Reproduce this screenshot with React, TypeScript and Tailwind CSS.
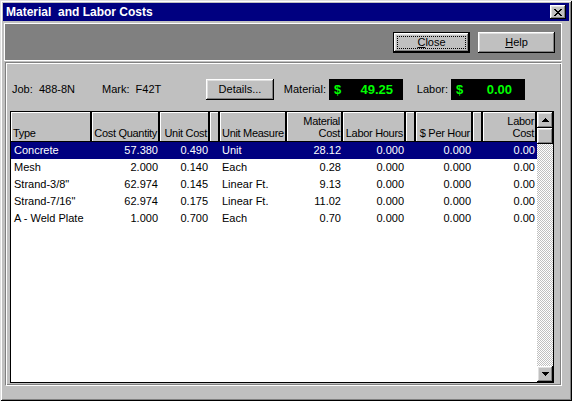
import React from "react";

const raised =
  "shadow-[inset_-1px_-1px_0_#000,inset_1px_1px_0_#fff,inset_-2px_-2px_0_#808080,inset_2px_2px_0_#dfdfdf]";

interface Col {
  head: string[];
  hw: string;
  bw: string;
  right?: boolean;
}

const cols: Col[] = [
  { head: ["Type"], hw: "w-[79px]", bw: "w-[81px] pl-[3px]" },
  { head: ["Cost Quantity"], hw: "w-[66px]", bw: "w-[68px] pr-[2px]", right: true },
  { head: ["Unit Cost"], hw: "w-[48px]", bw: "w-[50px] pr-[2px]", right: true },
  { head: [], hw: "w-[8px]", bw: "w-[10px]" },
  { head: ["Unit Measure"], hw: "w-[65px]", bw: "w-[67px] pl-[2px]" },
  { head: ["Material", "Cost"], hw: "w-[54px]", bw: "w-[56px] pr-[2px]", right: true },
  { head: ["Labor Hours"], hw: "w-[61px]", bw: "w-[63px] pr-[2px]", right: true },
  { head: [], hw: "w-[8px]", bw: "w-[10px]" },
  { head: ["$ Per Hour"], hw: "w-[55px]", bw: "w-[57px] pr-[2px]", right: true },
  { head: [], hw: "w-[8px]", bw: "w-[10px]" },
  { head: ["Labor", "Cost"], hw: "w-[52px]", bw: "w-[54px] pr-[2px]", right: true },
];

const rows: string[][] = [
  ["Concrete", "57.380", "0.490", "", "Unit", "28.12", "0.000", "", "0.000", "", "0.00"],
  ["Mesh", "2.000", "0.140", "", "Each", "0.28", "0.000", "", "0.000", "", "0.00"],
  ["Strand-3/8\"", "62.974", "0.145", "", "Linear Ft.", "9.13", "0.000", "", "0.000", "", "0.00"],
  ["Strand-7/16\"", "62.974", "0.175", "", "Linear Ft.", "11.02", "0.000", "", "0.000", "", "0.00"],
  ["A - Weld Plate", "1.000", "0.700", "", "Each", "0.70", "0.000", "", "0.000", "", "0.00"],
];

const Arrow = ({ down }: { down?: boolean }) => (
  <svg width="7" height="4" viewBox="0 0 7 4" shapeRendering="crispEdges">
    <path d={down ? "M0 0h7L3.5 4z" : "M3.5 0L7 4H0z"} fill="#000" />
  </svg>
);

export default function App() {
  return (
    <div
      className={
        "w-[572px] h-[401px] bg-[#c0c0c0] p-[3px] flex flex-col text-[11px] text-black font-['Liberation_Sans',Arial,sans-serif] " +
        "shadow-[inset_1px_1px_0_#dfdfdf,inset_-1px_-1px_0_#000,inset_2px_2px_0_#fff,inset_-2px_-2px_0_#808080]"
      }
    >
      {/* title bar */}
      <div className="h-[18px] bg-[#000080] flex items-center justify-between pl-[3px] pr-[3px]">
        <span className="text-white font-bold text-[12px] whitespace-pre leading-none">
          Material  and Labor Costs
        </span>
        <div className={"w-[16px] h-[14px] bg-[#c0c0c0] flex items-center justify-center " + raised}>
          <svg width="8" height="7" viewBox="0 0 8 7" shapeRendering="crispEdges">
            <path
              d="M0 0h2v1h1v1h2V1h1V0h2v1H7v1H6v1H5v1h1v1h1v1h1v1H6V6H5V5H3v1H2v1H0V6h1V5h1V4h1V3H2V2H1V1H0z"
              fill="#000"
            />
          </svg>
        </div>
      </div>

      {/* toolbar */}
      <div className="mt-[2px] ml-[1px] w-[558px] h-[38px] bg-[#808080] border border-white flex justify-end items-start pt-[8px] pr-[6px] gap-[8px]">
        <button className="w-[77px] h-[21px] bg-[#c0c0c0] border border-black flex p-0">
          <span className={"flex-1 flex " + raised}>
            <span className="flex-1 m-[3px] border border-dotted border-black flex items-center justify-center">
              <span>
                <span className="underline">C</span>lose
              </span>
            </span>
          </span>
        </button>
        <button className={"w-[77px] h-[21px] bg-[#c0c0c0] flex items-center justify-center " + raised}>
          <span>
            <span className="underline">H</span>elp
          </span>
        </button>
      </div>

      {/* main group */}
      <div className="mt-[1px] ml-[2px] w-[557px] h-[324px] border border-t-[#808080] border-l-[#808080] border-b-white border-r-white shadow-[inset_1px_1px_0_#fff,inset_-1px_-1px_0_#808080] p-[1px] pl-[4px] pt-[16px]">
        <div className="flex items-center h-[21px]">
          <span className="w-[92px] pl-[2px] whitespace-pre">Job:  488-8N</span>
          <span className="w-[104px] whitespace-pre">Mark:  F42T</span>
          <button className={"w-[68px] h-[21px] bg-[#c0c0c0] flex items-center justify-center " + raised}>
            Details...
          </button>
          <span className="w-[55px] text-right pr-[3px]">Material:</span>
          <div className="w-[74px] h-[21px] bg-black flex items-center justify-between pl-[5px] pr-[10px] text-[#00ff00] font-bold text-[13px]">
            <span>$</span>
            <span>49.25</span>
          </div>
          <span className="w-[48px] text-right pr-[3px]">Labor:</span>
          <div className="w-[74px] h-[21px] bg-black flex items-center justify-between pl-[5px] pr-[13px] text-[#00ff00] font-bold text-[13px]">
            <span>$</span>
            <span>0.00</span>
          </div>
        </div>

        {/* grid */}
        <div className="mt-[11px] w-[544px] h-[272px] border border-black bg-white flex">
          <div className="w-[526px] flex flex-col">
            <div className="h-[30px] bg-black flex items-start shrink-0">
              {cols.map((c, i) => (
                <div
                  key={i}
                  className={
                    c.hw +
                    " h-[29px] mr-[2px] bg-[#c0c0c0] border-t border-l border-white flex flex-col justify-end pb-[2px] leading-[12px] whitespace-nowrap overflow-hidden tracking-[-0.3px] " +
                    (c.right ? "items-end pr-[1px]" : "items-start pl-[1px]")
                  }
                >
                  {c.head.map((h) => (
                    <span key={h}>{h}</span>
                  ))}
                </div>
              ))}
            </div>
            {rows.map((r, ri) => (
              <div
                key={ri}
                className={
                  "h-[17px] flex items-center shrink-0 " +
                  (ri === 0 ? "bg-[#000080] text-white" : "bg-white text-black")
                }
              >
                {cols.map((c, ci) => (
                  <span
                    key={ci}
                    className={
                      c.bw + " whitespace-nowrap overflow-hidden " + (c.right ? "text-right" : "text-left")
                    }
                  >
                    {r[ci]}
                  </span>
                ))}
              </div>
            ))}
          </div>

          {/* scrollbar */}
          <div className="w-[16px] flex flex-col">
            <div className={"h-[16px] bg-[#c0c0c0] flex items-center justify-center shrink-0 " + raised}>
              <Arrow />
            </div>
            <div className={"h-[16px] bg-[#c0c0c0] shrink-0 " + raised} />
            <div className="flex-1 bg-[repeating-conic-gradient(#c0c0c0_0_25%,#ffffff_0_50%)] bg-[length:2px_2px]" />
            <div className={"h-[16px] bg-[#c0c0c0] flex items-center justify-center shrink-0 " + raised}>
              <Arrow down />
            </div>
          </div>
        </div>
      </div>
    </div>
  );
}
